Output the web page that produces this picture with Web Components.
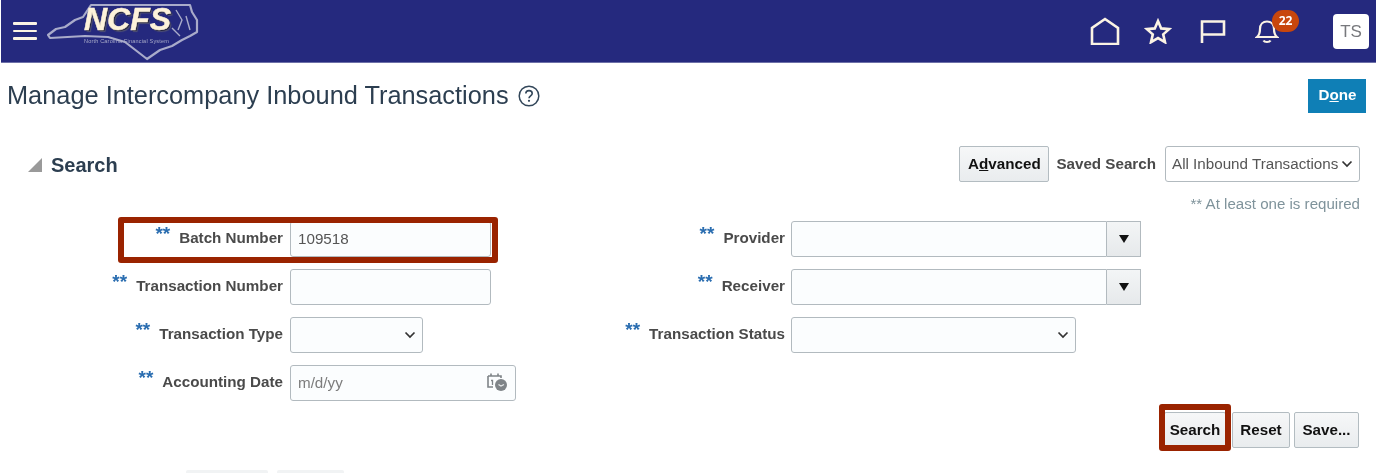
<!DOCTYPE html>
<html lang="en">
<head>
<meta charset="utf-8">
<title>Manage Intercompany Inbound Transactions</title>
<style>
  html, body { margin: 0; height: 473px; overflow: hidden; background: #fff; }
  body { font-family: "Liberation Sans", Arial, sans-serif; }
</style>
</head>
<body>
<app-page></app-page>
<script>
const chevron = `<svg width="12" height="8" viewBox="0 0 12 8"><path d="M1.5 1.5 6 6l4.5-4.5" fill="none" stroke="#333" stroke-width="1.7"/></svg>`;

class AppHeader extends HTMLElement {
  constructor() {
    super();
    this.attachShadow({ mode: 'open' });
    this.shadowRoot.innerHTML = `
      <style>
        :host { display: flex; align-items: center; height: 62px; background: #25297e; border-bottom: 1px solid #6d70a8; margin-left: 1px; color: #fbf3e4; }
        .burger { display: flex; flex-direction: column; gap: 5px; margin-left: 12px; width: 24px; }
        .burger i { display: block; height: 2.500px; background: #fbf3e4; border-radius: 1px; }
        .logo { position: relative; width: 152px; height: 62px; margin-left: 10px; }
        .logo svg { position: absolute; left: 0; top: 0; }
        .ncfs { position: absolute; left: 37px; top: 6px; font: italic 700 32px/27px "Liberation Sans", sans-serif; color: #fdf2da; -webkit-text-stroke: .5px #fdf2da; text-shadow: 1px 1px 1px #1a1a30, 2px 2px 1px #54557a; }
        .tag { position: absolute; left: 37px; top: 38px; font: 5.500px/6px "Liberation Sans", sans-serif; letter-spacing: .2px; color: #a9abc9; white-space: nowrap; }
        .icons { margin-left: auto; display: flex; align-items: center; }
        svg.ic { display: block; fill: none; stroke: #fbf3e4; stroke-width: 2.6; }
        .bell { position: relative; margin-left: 29px; width: 26px; height: 26px; }
        .badge { position: absolute; left: 17px; top: -8px; width: 27px; height: 22px; border-radius: 11px; background: #c8460c; color: #fff; font: 700 12px/22px "Open Sans", sans-serif; text-align: center; }
        .ts { margin: 0 7px 0 52px; width: 36px; height: 35px; border-radius: 4px; background: #fff; color: #77787c; font: 17px/35px "Liberation Sans", sans-serif; text-align: center; }
      </style>
      <div class="burger"><i></i><i></i><i></i></div>
      <div class="logo">
        <svg width="152" height="62" viewBox="47 0 152 62" fill="none"><path d="M48 35 56 29 65 27 75 20 83 17 91 5H190L192 12 197 20 197 32 190 36 182 40 172 46 160 50 147 59 138 52 125 42 108 37 85 36 50 38Z" stroke="#a9abca" stroke-width="2.2" stroke-linejoin="round"/><path d="M176 10 182 20 178 30M186 16 190 30M172 28 180 36" stroke="#a9abca" stroke-width="1.4"/></svg>
        <span class="ncfs">NCFS</span>
        <span class="tag">North Carolina Financial System</span>
      </div>
      <div class="icons">
        <svg class="ic" width="30" height="28" viewBox="0 0 30 28"><path d="M2 27V11L15 2l13 9v16Z" stroke-linejoin="miter"/></svg>
        <svg class="ic" style="margin-left:24px" width="28" height="26" viewBox="0 0 28 26"><path d="m14 3 3.2 7.4 8 .7-6 5.3 1.8 7.8L14 20.100 7 24.200l1.800-7.800-6-5.300 8-.7Z" stroke-linejoin="miter"/></svg>
        <svg class="ic" style="margin-left:28px" width="26" height="25" viewBox="0 0 26 25"><path d="M2 24V2.500h22v13H2"/></svg>
        <div class="bell">
          <svg class="ic" style="stroke-width:2.2" width="24" height="26" viewBox="0 0 24 26"><path d="M2 19c2.500-2 3-4 3-8 0-4.500 3-7.500 7-7.500s7 3 7 7.500c0 4 .5 6 3 8ZM8.500 22.500c1 2 6 2 7 0"/></svg>
          <span class="badge">22</span>
        </div>
        <div class="ts">TS</div>
      </div>`;
  }
}
customElements.define('app-header', AppHeader);

class UiButton extends HTMLElement {
  constructor() {
    super();
    this.attachShadow({ mode: 'open' });
    this.shadowRoot.innerHTML = `
      <style>
        :host { display: inline-flex; align-items: center; justify-content: center; box-sizing: border-box; height: 36px; background: linear-gradient(#f6f7f8, #e9ecee); border: 1px solid #b3bcc1; border-radius: 2px; color: #111; font: 700 15.200px/1 "Liberation Sans", sans-serif; }
        :host([primary]) { background: #0f7fb6; border: 0; border-radius: 0; color: #fff; padding: 0 0 2px 1px; }
      </style>
      <slot></slot>`;
  }
}
customElements.define('ui-button', UiButton);

class FormField extends HTMLElement {
  constructor() {
    super();
    this.attachShadow({ mode: 'open' });
  }
  connectedCallback() {
    const kind = this.getAttribute('kind') || 'text';
    const width = this.getAttribute('width');
    const value = this.getAttribute('value') || '';
    const hint = this.getAttribute('hint') || '';
    let tail = '';
    if (kind === 'select') tail = `<span class="chev">${chevron}</span>`;
    if (kind === 'date') tail = `<svg class="cal" width="22" height="20" viewBox="0 0 22 20"><path d="M2 4h13v2M2 4v11h5M5 1.500V4M12 1.500V4" fill="none" stroke="#7f8488" stroke-width="1.600"/><path d="M5 8.500h1.500V13" fill="none" stroke="#7f8488" stroke-width="1.300"/><circle cx="15" cy="13" r="6" fill="#7f8488"/><path d="M12.500 12.500 15 14l3-1.500" fill="none" stroke="#e8eaeb" stroke-width="1.200"/></svg>`;
    this.shadowRoot.innerHTML = `
      <style>
        :host { display: grid; grid-template-columns: var(--label-width, 283px) auto; column-gap: var(--label-gap, 7px); justify-content: start; align-items: center; position: relative; height: 36px; }
        .lab { display: flex; justify-content: flex-end; gap: 9px; margin-bottom: 2px; color: #4a4a4a; font: 700 15.200px/34px "Liberation Sans", sans-serif; white-space: nowrap; }
        .req { color: #2a6db0; font-size: 19px; line-height: 26px; }
        .ctl { display: flex; }
        .box { box-sizing: border-box; display: flex; align-items: center; justify-content: space-between; height: 36px; padding: 0 7px 1px; background: #fbfdfe; border: 1.500px solid #b2babf; border-radius: 3px; color: #555; font: 15.200px/1 "Liberation Sans", sans-serif; }
        .box.ph { color: #7d7d7d; }
        .chev { display: flex; margin-right: -1px; }
        .cal { margin: -2px 0 0 0; }
        .lov { box-sizing: border-box; width: 34px; height: 36px; display: flex; align-items: center; justify-content: center; background: linear-gradient(#f3f5f6, #e6e9eb); border: 1px solid #b2babf; border-left: 0; }
        .lov i { width: 0; height: 0; border: 5.500px solid transparent; border-top: 8px solid #111; border-bottom: 0; }
        .mark { position: absolute; left: 118px; top: -4px; box-sizing: border-box; width: 380px; height: 46px; border: 6px solid #9a2300; border-radius: 3px; pointer-events: none; }
      </style>
      <div class="lab"><span class="req">**</span><span><slot></slot></span></div>
      <div class="ctl">
        <div class="box${hint ? ' ph' : ''}" style="width:${width}px${kind === 'lov' ? ';border-radius:3px 0 0 3px' : ''}"><span>${value || hint}</span>${tail}</div>
        ${kind === 'lov' ? '<div class="lov"><i></i></div>' : ''}
      </div>
      ${this.hasAttribute('marked') ? '<div class="mark"></div>' : ''}`;
  }
}
customElements.define('form-field', FormField);

class SearchPanel extends HTMLElement {
  constructor() {
    super();
    this.attachShadow({ mode: 'open' });
    this.shadowRoot.innerHTML = `
      <style>
        :host { display: block; padding-right: 16px; }
        .head { display: flex; align-items: center; height: 36px; }
        .tri { width: 0; height: 0; margin: 2px 0 0 28px; border-style: solid; border-width: 0 0 14px 14px; border-color: transparent transparent #9a9a9a transparent; }
        h2 { margin: 2px auto 0 9px; color: #2c3e50; font: 700 20px/34px "Liberation Sans", sans-serif; }
        .saved { margin: 0 9px 0 7px; color: #4a4a4a; font: 700 15.200px/36px "Liberation Sans", sans-serif; }
        .sel { box-sizing: border-box; display: flex; align-items: center; justify-content: space-between; width: 195px; height: 36px; padding: 0 6px; background: #fff; border: 1.500px solid #b2babf; border-radius: 3px; color: #555; font: 15.200px/1 "Liberation Sans", sans-serif; white-space: nowrap; }
        .note { margin-top: 13px; text-align: right; color: #7f939b; font: 15.100px/17px "Liberation Sans", sans-serif; }
        .form { display: grid; grid-template-columns: 500px 1fr; margin-top: 9px; }
        .col { display: flex; flex-direction: column; gap: 12px; }
        .col.right { --label-width: 285px; --label-gap: 6px; }
        .actions { display: flex; justify-content: flex-end; gap: 4px; margin-top: 11px; padding-right: 1px; position: relative; }
        .mark { position: absolute; right: 129px; top: -8px; box-sizing: border-box; width: 72px; height: 47px; border: 6px solid #9a2300; border-radius: 3px; }
        .ghost { display: flex; gap: 9px; margin: 22px 0 0 186px; }
        .ghost i { display: block; height: 4px; background: #f1f3f4; border-radius: 2px 2px 0 0; }
      </style>
      <div class="head">
        <span class="tri"></span><h2>Search</h2>
        <ui-button style="width:90px"><span>A<u>d</u>vanced</span></ui-button>
        <span class="saved">Saved Search</span>
        <div class="sel"><span>All Inbound Transactions</span>${chevron}</div>
      </div>
      <div class="note">** At least one is required</div>
      <div class="form">
        <div class="col">
          <form-field width="201" value="109518" marked>Batch Number</form-field>
          <form-field width="201">Transaction Number</form-field>
          <form-field width="133" kind="select">Transaction Type</form-field>
          <form-field width="226" kind="date" hint="m/d/yy">Accounting Date</form-field>
        </div>
        <div class="col right">
          <form-field width="316" kind="lov">Provider</form-field>
          <form-field width="316" kind="lov">Receiver</form-field>
          <form-field width="285" kind="select">Transaction Status</form-field>
        </div>
      </div>
      <div class="actions">
        <ui-button style="width:62px">Search</ui-button>
        <ui-button style="width:58px;margin-left:2px">Reset</ui-button>
        <ui-button style="width:65px">Save...</ui-button>
        <div class="mark"></div>
      </div>
      <div class="ghost"><i style="width:82px"></i><i style="width:67px"></i></div>`;
  }
}
customElements.define('search-panel', SearchPanel);

class AppPage extends HTMLElement {
  constructor() {
    super();
    this.attachShadow({ mode: 'open' });
    this.shadowRoot.innerHTML = `
      <style>
        :host { display: block; width: 1376px; filter: blur(.35px); }
        .title { display: flex; align-items: center; justify-content: space-between; height: 34px; margin-top: 16px; padding: 0 10px 0 7px; }
        .name { display: flex; align-items: center; gap: 9px; }
        h1 { margin: 0 0 2px; color: #2c3e50; font: 400 25.350px/32px "Liberation Sans", sans-serif; white-space: nowrap; }
        .help { display: block; }
        search-panel { margin-top: 33px; }
      </style>
      <app-header></app-header>
      <div class="title">
        <div class="name">
          <h1>Manage Intercompany Inbound Transactions</h1>
          <svg class="help" width="22" height="22" viewBox="0 0 22 22"><circle cx="11" cy="11" r="9.800" fill="none" stroke="#33475a" stroke-width="1.500"/><path d="M7.800 8.600c0-2 1.500-3 3.200-3s3.200 1 3.200 2.800c0 2.400-3.200 2.400-3.200 4.800" fill="none" stroke="#33475a" stroke-width="1.600"/><circle cx="11" cy="15.800" r="1.100" fill="#33475a"/></svg>
        </div>
        <ui-button primary style="width:58px;height:34px"><span>D<u>o</u>ne</span></ui-button>
      </div>
      <search-panel></search-panel>`;
  }
}
customElements.define('app-page', AppPage);
</script>
</body>
</html>
